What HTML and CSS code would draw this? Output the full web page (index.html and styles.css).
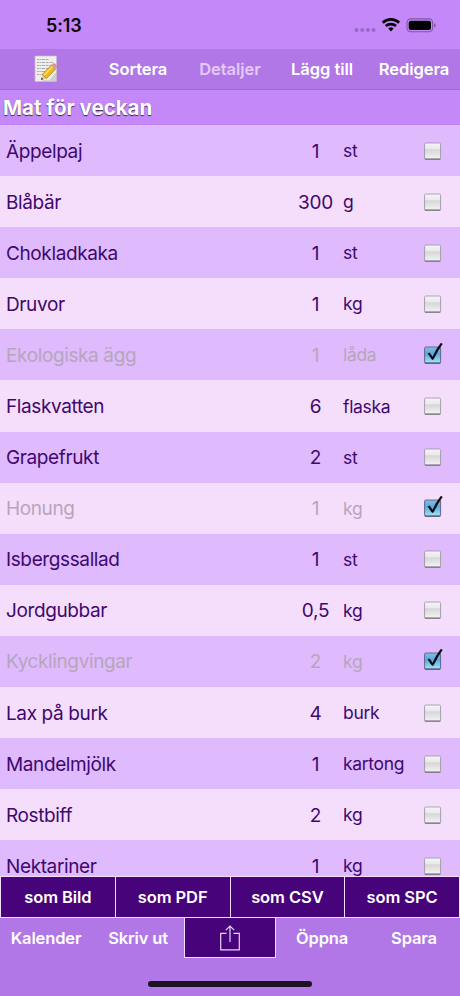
FILE: index.html
```html
<!DOCTYPE html>
<html lang="sv">
<head>
<meta charset="utf-8">
<title>Mat för veckan</title>
<link rel="stylesheet" href="styles.css">
</head>
<body>
<svg width="0" height="0" class="defs" aria-hidden="true">
  <defs>
    <linearGradient id="grey" x1="0" y1="0" x2="0" y2="1">
      <stop offset="0" stop-color="#f6f4f7"/><stop offset=".38" stop-color="#e9e8ea"/>
      <stop offset=".42" stop-color="#d6d5d8"/><stop offset="1" stop-color="#f4f4f4"/>
    </linearGradient>
    <linearGradient id="blue" x1="0" y1="0" x2="0" y2="1">
      <stop offset="0" stop-color="#88bde2"/><stop offset=".42" stop-color="#58a9dc"/>
      <stop offset="1" stop-color="#a5e4f6"/>
    </linearGradient>
    <symbol id="box" viewBox="0 0 22 24">
      <rect x="2.400" y="5.800" width="16.400" height="16" rx="1.500" fill="#55505c" opacity=".5"/>
      <rect x="2.600" y="5" width="16" height="16" rx="1.200" fill="url(#grey)" stroke="#9c95a3" stroke-width=".8"/>
      <path d="M3 21.100h15.200" stroke="#6f6975" stroke-width=".9"/>
    </symbol>
    <symbol id="checked" viewBox="0 0 22 24">
      <rect x="2.400" y="5.800" width="16.400" height="16" rx="1.500" fill="#484058" opacity=".6"/>
      <rect x="2.600" y="5" width="16" height="16" rx="1.200" fill="url(#blue)" stroke="#5d6287" stroke-width=".9"/>
      <path d="M3 21.100h15.200" stroke="#4a5474" stroke-width="1"/>
      <path d="M6 11.600l1.600-.7 3 4.300Q14 7.500 18.800 1.300l1.500.6Q15.300 9 11.300 17.300l-1.300.1z" fill="#08080c" stroke="#08080c" stroke-width=".6"/>
    </symbol>
  </defs>
</svg>
<div class="phone">
  <header class="status">
    <span class="time">5:13</span>
    <svg class="signals" width="86" height="20" viewBox="0 0 86 20">
      <g fill="#9869c8"><circle cx="6.500" cy="15" r="2"/><circle cx="12.300" cy="15" r="2"/><circle cx="18" cy="15" r="2"/><circle cx="23.500" cy="15" r="2"/></g>
      <g fill="none" stroke="#050208" stroke-width="2.700">
        <path d="M32.700 7.700a12 12 0 0 1 16.400 0"/><path d="M35.800 11.100a7.500 7.500 0 0 1 10.200 0"/>
      </g>
      <path d="M38.200 13.400a4.100 4.100 0 0 1 5.400 0L40.900 16.400z" fill="#050208"/>
      <rect x="57" y="3.900" width="25.600" height="12.800" rx="3.800" fill="none" stroke="#7d57a2" stroke-width="1.100"/>
      <rect x="58.700" y="5.700" width="22.300" height="9.300" rx="2.200" fill="#020103"/>
      <path d="M84 8.200q1.700.7 1.700 2t-1.700 2z" fill="#8157a9"/>
    </svg>
  </header>
  <nav class="toolbar">
    <svg class="memo" width="24" height="28" viewBox="0 0 24 28">
      <path d="M1 1h21.500v25.500H1z" fill="#efeeed" stroke="#c6bfcb" stroke-width=".7"/>
      <g stroke="#9b9b9c" stroke-width=".8" fill="none" stroke-dasharray="2.500 .6 1.400 .5 3 .7">
        <path d="M3 4.500h12M3 7.500h16M3 10.500h15M3 13.500h12M3 16.500h8M3 19.500h6"/>
      </g>
      <path d="M9 25l6 .6 7.500-9V26.500H8z" fill="#b5aeb3" opacity=".5"/>
      <path d="M7 24.900l1.200-5.500 4.300 4.200z" fill="#e4c79a"/>
      <path d="M7 24.900l.6-2.300 1.700 1.600z" fill="#383330"/>
      <path d="M8.200 19.400L17.800 9.800l4 4.200-9.300 9.600z" fill="#f2b51c" stroke="#9b7420" stroke-width=".6"/>
      <path d="M9.500 19.500l9-9 1.200 1.200-9 9z" fill="#ffdc55"/>
      <path d="M17.200 10.300l1.200-1.200 4.100 4.100-1.200 1.300z" fill="#a9aaa9"/>
      <path d="M18.400 9.100q1.600-1.600 3.600.2t.5 3.900z" fill="#e8889a"/>
    </svg>
    <span>Sortera</span><span class="t-detail">Detaljer</span><span>Lägg till</span><span>Redigera</span>
  </nav>
  <h1 class="title">Mat för veckan</h1>
  <main class="list">
    <div class="row"><span class="name">Äppelpaj</span><span class="qty">1</span><span class="unit">st</span><svg class="check"><use href="#box"/></svg></div>
    <div class="row"><span class="name">Blåbär</span><span class="qty">300</span><span class="unit">g</span><svg class="check"><use href="#box"/></svg></div>
    <div class="row"><span class="name">Chokladkaka</span><span class="qty">1</span><span class="unit">st</span><svg class="check"><use href="#box"/></svg></div>
    <div class="row"><span class="name">Druvor</span><span class="qty">1</span><span class="unit">kg</span><svg class="check"><use href="#box"/></svg></div>
    <div class="row done"><span class="name">Ekologiska ägg</span><span class="qty">1</span><span class="unit">låda</span><svg class="check"><use href="#checked"/></svg></div>
    <div class="row"><span class="name">Flaskvatten</span><span class="qty">6</span><span class="unit">flaska</span><svg class="check"><use href="#box"/></svg></div>
    <div class="row"><span class="name">Grapefrukt</span><span class="qty">2</span><span class="unit">st</span><svg class="check"><use href="#box"/></svg></div>
    <div class="row done"><span class="name">Honung</span><span class="qty">1</span><span class="unit">kg</span><svg class="check"><use href="#checked"/></svg></div>
    <div class="row"><span class="name">Isbergssallad</span><span class="qty">1</span><span class="unit">st</span><svg class="check"><use href="#box"/></svg></div>
    <div class="row"><span class="name">Jordgubbar</span><span class="qty">0,5</span><span class="unit">kg</span><svg class="check"><use href="#box"/></svg></div>
    <div class="row done"><span class="name">Kycklingvingar</span><span class="qty">2</span><span class="unit">kg</span><svg class="check"><use href="#checked"/></svg></div>
    <div class="row"><span class="name">Lax på burk</span><span class="qty">4</span><span class="unit">burk</span><svg class="check"><use href="#box"/></svg></div>
    <div class="row"><span class="name">Mandelmjölk</span><span class="qty">1</span><span class="unit">kartong</span><svg class="check"><use href="#box"/></svg></div>
    <div class="row"><span class="name">Rostbiff</span><span class="qty">2</span><span class="unit">kg</span><svg class="check"><use href="#box"/></svg></div>
    <div class="row"><span class="name">Nektariner</span><span class="qty">1</span><span class="unit">kg</span><svg class="check"><use href="#box"/></svg></div>
  </main>
  <div class="exports"><span>som Bild</span><span>som PDF</span><span>som CSV</span><span>som SPC</span></div>
  <footer class="bottom">
    <div class="actions">
      <span>Kalender</span><span>Skriv ut</span>
      <span class="share"><svg width="22" height="28" viewBox="0 0 22 28" fill="none" stroke="#e6d5f4" stroke-width="1.200"><path d="M7.500 9.300H1.700v16.500h18.600V9.300h-5.800M11 18V2M6.800 6.200L11 2l4.200 4.200"/></svg></span>
      <span>Öppna</span><span>Spara</span>
    </div>
    <div class="home"></div>
  </footer>
</div>
</body>
</html>
```
FILE: styles.css
```css
* { box-sizing: border-box; }
body { margin: 0; font-family: Inter, "Liberation Sans", sans-serif; }
.defs { position: absolute; }
.phone { width: 460px; height: 996px; display: flex; flex-direction: column; overflow: hidden; background: #c488f8; }
.status { height: 49px; flex: none; display: flex; justify-content: space-between; padding: 15px 24px 0 46px; }
.time { font-size: 18px; line-height: 22px; font-weight: 600; letter-spacing: -.1px; color: #0b0410; }
.signals { display: block; }
.toolbar { height: 41px; flex: none; display: grid; grid-template-columns: repeat(5, 92px); align-items: center; justify-items: center; background: #b277e6; border-bottom: 1px solid #a169d5; color: #fff; font-size: 16.500px; font-weight: 600; letter-spacing: -.05px; white-space: nowrap; }
.t-detail { color: #e3caf7; }
.title { height: 35px; flex: none; margin: 0; padding-left: 3px; font-size: 20.500px; line-height: 36px; font-weight: 700; letter-spacing: -.03px; color: #fff; text-shadow: 0 1px 1px #40245c; border-bottom: 1px solid #c17efb; }
.list { height: 751px; flex: none; overflow: hidden; }
.row { height: 51.100px; display: grid; grid-template-columns: 282px 55px 78.500px 22px; align-items: center; padding-left: 6px; background: #dfbafd; color: #40086f; font-size: 19px; white-space: nowrap; }
.row:nth-child(even) { background: #f5defb; }
.row.done { color: #b5a6bb; }
.name { padding-top: 1px; letter-spacing: -.38px; }
.qty { padding-top: 1px; text-align: center; letter-spacing: -.2px; }
.unit { font-size: 17.500px; letter-spacing: -.32px; }
.check { width: 22px; height: 24px; display: block; position: relative; top: -1px; }
.exports { height: 42px; flex: none; display: grid; grid-template-columns: repeat(4, 1fr); gap: 1px; padding: 1px; background: #f1ddfb; color: #fff; font-size: 16.500px; font-weight: 600; letter-spacing: -.08px; }
.exports span { display: grid; place-items: center; background: #47047a; }
.bottom { flex: 1; background: #b277e6; }
.actions { height: 40px; display: grid; grid-template-columns: repeat(5, 92px); justify-items: center; align-items: center; color: #fff; font-size: 16.500px; font-weight: 600; letter-spacing: -.15px; white-space: nowrap; }
.share { width: 92px; height: 40px; display: grid; place-items: center; background: #47047a; border: 1px solid #f1ddfb; border-top: 0; }
.home { width: 164px; height: 6px; margin: 23px auto 0; border-radius: 3px; background: #1b1321; }
```
